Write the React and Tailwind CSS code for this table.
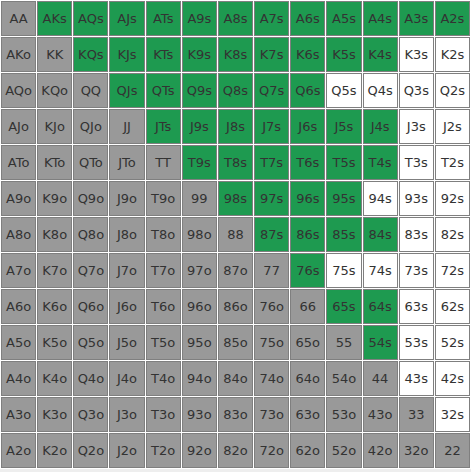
import React from "react";

const RANKS = ["A", "K", "Q", "J", "T", "9", "8", "7", "6", "5", "4", "3", "2"];

// columns of suited hands that are in the range, per row
const GREEN = {
  0: [1, 12],
  1: [2, 10],
  2: [3, 8],
  3: [4, 10],
  4: [5, 10],
  5: [6, 9],
  6: [7, 10],
  7: [8, 8],
  8: [9, 10],
  9: [10, 10],
};

const handName = (i, j) => {
  if (i === j) return RANKS[i] + RANKS[j];
  if (j > i) return RANKS[i] + RANKS[j] + "s";
  return RANKS[j] + RANKS[i] + "o";
};

const cellClass = (i, j) => {
  if (j <= i) return "bg-[#999999]";
  const g = GREEN[i];
  if (g && j >= g[0] && j <= g[1]) return "bg-[#1e9a50]";
  return "bg-white";
};

const Cell = ({ i, j }) => (
  <div
    className={`h-[35px] flex items-center justify-center border border-[#7f7f7f] text-[13px] text-[#333333] ${cellClass(
      i,
      j
    )}`}
  >
    {handName(i, j)}
  </div>
);

export default function App() {
  return (
    <div
      className="w-[471px] h-[472px] bg-[#eeeeee]"
      style={{ fontFamily: '"DejaVu Sans", Verdana, sans-serif' }}
    >
      <div className="grid grid-cols-[repeat(13,minmax(0,1fr))] gap-px p-px bg-white">
        {RANKS.map((_, i) =>
          RANKS.map((__, j) => <Cell key={`${i}-${j}`} i={i} j={j} />)
        )}
      </div>
    </div>
  );
}
